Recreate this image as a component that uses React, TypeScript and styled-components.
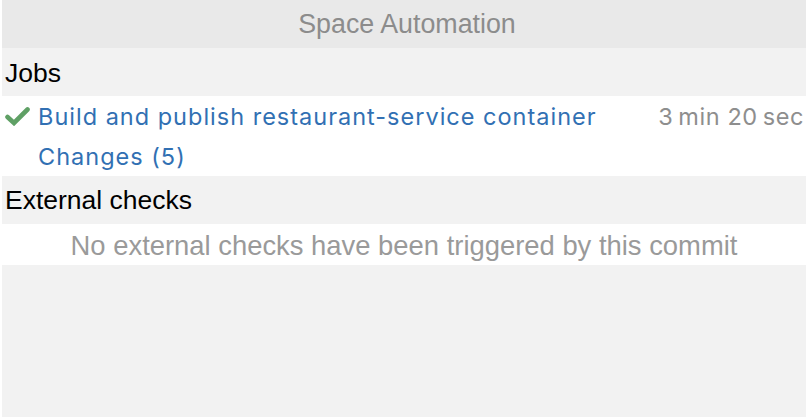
import React from "react";
import styled, { createGlobalStyle } from "styled-components";

const Global = createGlobalStyle`
  html, body { margin: 0; padding: 0; background: #ffffff; }
  body { font-family: "Liberation Sans", Arial, sans-serif; -webkit-font-smoothing: antialiased; }
`;

const Panel = styled.div`
  margin: 0 0 1px 2px;
  height: 417px;
  background: #f2f2f2;
  display: flex;
  flex-direction: column;
`;

const Header = styled.div`
  height: 48px;
  background: #e9e9e9;
  display: flex;
  align-items: center;
  justify-content: center;
  padding-left: 6px;
  font-size: 26.8px;
  color: #8c8c8c;
`;

const SectionTitle = styled.div<{ $shift?: number }>`
  height: 48px;
  display: flex;
  align-items: center;
  padding-left: 3px;
  padding-top: ${(p) => p.$shift ?? 0}px;
  box-sizing: border-box;
  font-size: 26.5px;
  color: #000;
`;

const JobBlock = styled.div`
  background: #fff;
  height: 80px;
  box-sizing: border-box;
`;

const JobLine = styled.div`
  height: 40px;
  display: flex;
  align-items: center;
  font-family: Inter, "Noto Sans", sans-serif;
  font-size: 23.5px;
  letter-spacing: 1px;
`;

const IconCell = styled.div`
  width: 36px;
  display: flex;
  align-items: center;
  padding-left: 3px;
  box-sizing: border-box;
`;

const Link = styled.span`
  color: #3170b3;
  flex: 1;
`;

const Duration = styled.span`
  color: #8e8e8e;
  letter-spacing: 0.6px;
  padding-right: 2px;
`;

const Empty = styled.div`
  background: #fff;
  height: 41px;
  display: flex;
  align-items: center;
  justify-content: center;
  padding-top: 2px;
  box-sizing: border-box;
  font-size: 27.4px;
  color: #9a9a9a;
`;

const Check = () => (
  <svg width="25" height="19" viewBox="0 0 25 19">
    <path d="M2.5 10 L9 16 L22.5 2.5" fill="none" stroke="#5fa065" strokeWidth="4.6" strokeLinecap="round" strokeLinejoin="miter" />
  </svg>
);

export default function App() {
  return (
    <>
      <Global />
      <Panel>
        <Header>Space Automation</Header>
        <SectionTitle $shift={2}>Jobs</SectionTitle>
        <JobBlock>
          <JobLine>
            <IconCell><Check /></IconCell>
            <Link>Build and publish restaurant-service container</Link>
            <Duration>3{"\u2009"}min 20{"\u2009"}sec</Duration>
          </JobLine>
          <JobLine>
            <IconCell />
            <Link>Changes (5)</Link>
          </JobLine>
        </JobBlock>
        <SectionTitle>External checks</SectionTitle>
        <Empty>No external checks have been triggered by this commit</Empty>
      </Panel>
    </>
  );
}
